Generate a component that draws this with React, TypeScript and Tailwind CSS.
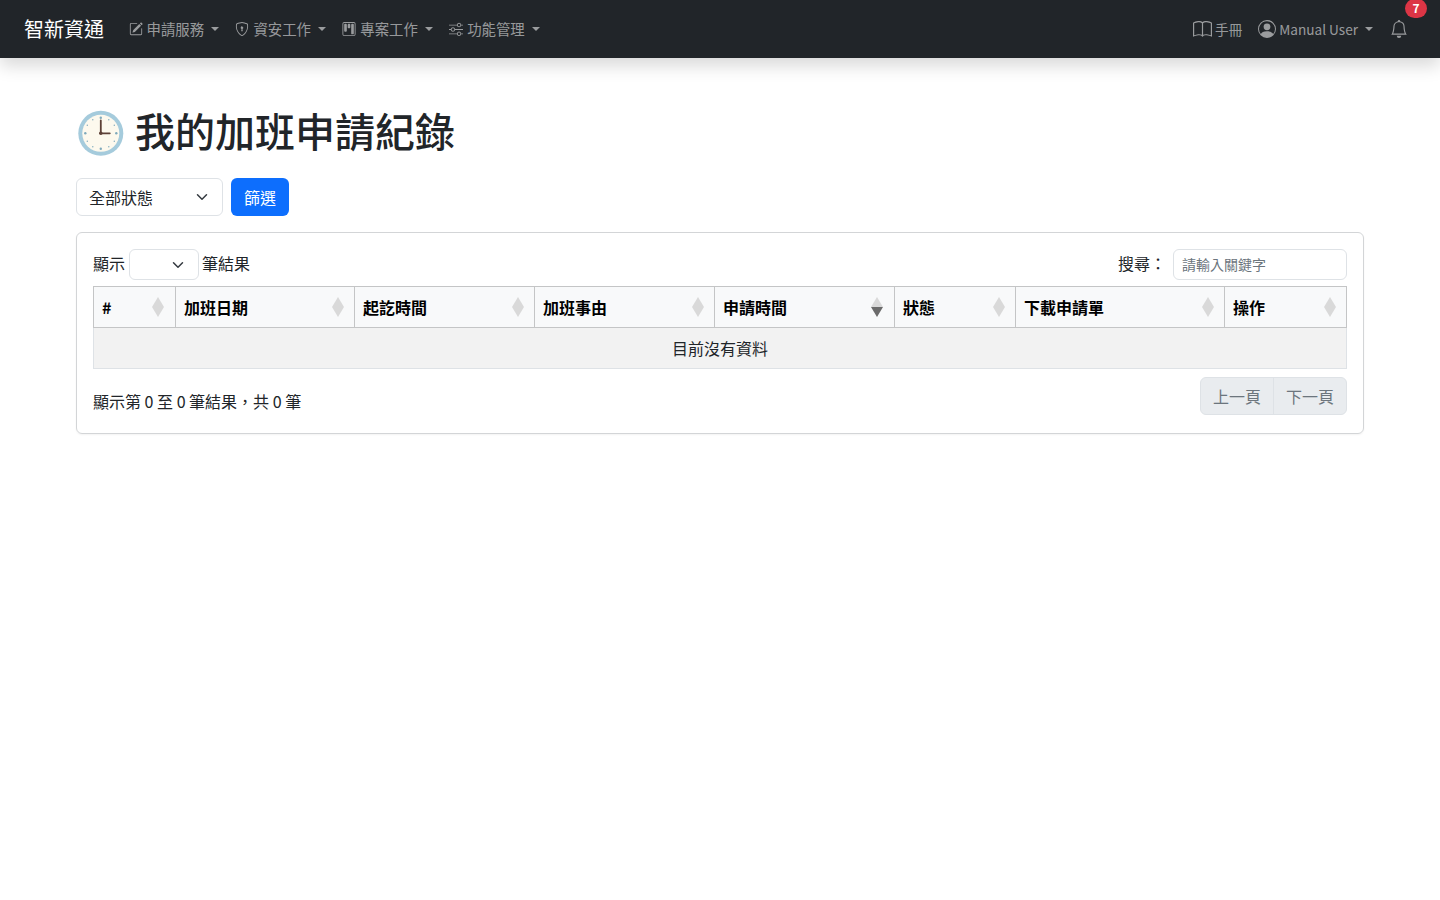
import { BsPencilSquare, BsShieldLock, BsKanban, BsSliders, BsBook, BsPersonCircle, BsBell } from 'react-icons/bs';

const NAV = [
  { label: '申請服務', icon: BsPencilSquare },
  { label: '資安工作', icon: BsShieldLock },
  { label: '專案工作', icon: BsKanban },
  { label: '功能管理', icon: BsSliders },
];

const COLUMNS = [
  { label: '#', width: 82 },
  { label: '加班日期', width: 179 },
  { label: '起訖時間', width: 180 },
  { label: '加班事由', width: 180 },
  { label: '申請時間', width: 180, sorted: true },
  { label: '狀態', width: 121 },
  { label: '下載申請單', width: 209 },
  { label: '操作', width: 122 },
];

function Caret() {
  return <span className="ml-[7px] h-0 w-0 border-x-[4px] border-t-[4px] border-x-transparent border-t-current" />;
}

function Chevron() {
  return (
    <svg viewBox="0 0 16 16" className="h-3 w-3 text-[#343a40]" fill="none" stroke="currentColor" strokeWidth="2" strokeLinecap="round" strokeLinejoin="round">
      <path d="m2 5 6 6 6-6" />
    </svg>
  );
}

function SortIcon({ sorted }: { sorted?: boolean }) {
  return (
    <svg viewBox="0 0 12 20" className="h-5 w-3">
      <path d="M6 0 12 10H0Z" fill="#d9d9d9" />
      <path d="M6 20 0 10h12Z" fill={sorted ? '#6b6b6b' : '#d9d9d9'} />
    </svg>
  );
}

function ClockIcon() {
  return (
    <svg viewBox="0 0 48 48" className="h-12 w-12 shrink-0">
      <g transform="translate(0.8 1.3)">
        <circle cx="24" cy="24" r="22.5" fill="#a5cbdc" />
        <circle cx="24" cy="24" r="18.5" fill="#fdf9ee" />
        <g fill="#7fa9bb">
          <circle cx="24" cy="8.5" r="1.2" />
          <circle cx="24" cy="39.5" r="1.2" />
          <circle cx="8.5" cy="24" r="1.2" />
          <circle cx="39.5" cy="24" r="1.2" />
          <circle cx="16" cy="10.5" r=".7" />
          <circle cx="32" cy="10.5" r=".7" />
          <circle cx="10.5" cy="16" r=".7" />
          <circle cx="37.5" cy="16" r=".7" />
          <circle cx="10.5" cy="32" r=".7" />
          <circle cx="37.5" cy="32" r=".7" />
          <circle cx="16" cy="37.5" r=".7" />
          <circle cx="32" cy="37.5" r=".7" />
        </g>
        <path d="M24 11v13h9" fill="none" stroke="#5d4037" strokeWidth="1.8" strokeLinecap="round" strokeLinejoin="round" />
        <circle cx="24" cy="24" r="1.8" fill="#5d4037" />
      </g>
    </svg>
  );
}

export default function App() {
  return (
    <div className="min-h-[900px] bg-white text-base text-[#212529] font-['Noto_Sans_CJK_TC',sans-serif]">
      {/* Navbar */}
      <nav className="flex h-[58px] items-center bg-[#212529] pl-6 pr-8 shadow-[0_8px_16px_rgba(0,0,0,0.15)]">
        <span className="mr-[24.5px] text-xl leading-[30px] text-white">智新資通</span>
        <ul className="flex items-center gap-[16.3px] text-[14.4px] text-[#ffffff8c]">
          {NAV.map(({ label, icon: Icon }) => (
            <li key={label} className="flex items-center">
              <Icon className="mr-1 h-[14px] w-[14px]" />
              <span>{label}</span>
              <Caret />
            </li>
          ))}
        </ul>
        <div className="ml-auto flex items-center text-[13.6px] text-[#ffffff8c]">
          <BsBook className="mt-[2px] mr-[3px] h-[19px] w-[19px]" />
          <span className="mt-[1px]">手冊</span>
          <BsPersonCircle className="ml-4 mr-[3px] h-[18px] w-[18px]" />
          <span>Manual User</span>
          <Caret />
          <div className="relative ml-[17px]">
            <BsBell className="block h-[18px] w-[18px]" />
            <span className="absolute -top-[21px] left-[15px] flex h-[19px] w-[22px] items-center justify-center rounded-full bg-[#dc3545] text-xs font-bold text-white">7</span>
          </div>
        </div>
      </nav>

      <main className="mx-auto w-[1288px] pt-[48px]">
        <h1 className="flex h-[52px] items-center gap-[11px] text-[40px] font-medium leading-[48px]">
          <ClockIcon />
          <span className="mb-1">我的加班申請紀錄</span>
        </h1>

        {/* Filter */}
        <div className="mt-5 flex gap-2">
          <div className="flex h-[38px] w-[147px] items-center justify-between rounded-md border border-[#dee2e6] pl-3 pr-[14px]">
            <span>全部狀態</span>
            <Chevron />
          </div>
          <button className="h-[38px] w-[58px] rounded-md bg-[#0d6efd] text-white">篩選</button>
        </div>

        {/* Table card */}
        <section className="mt-4 h-[202px] rounded-md border border-[#d3d5d7] p-4 shadow-[0_1px_2px_rgba(0,0,0,0.05)]">
          <div className="flex h-[31px] items-center justify-between">
            <div className="flex items-center">
              <span className="mb-1">顯示</span>
              <div className="ml-1 mr-[3px] flex h-[31px] w-[70px] items-center justify-end rounded-md border border-[#dee2e6] pr-[14px]">
                <Chevron />
              </div>
              <span className="mb-1">筆結果</span>
            </div>
            <div className="flex items-center">
              <span className="mb-1">搜尋：</span>
              <div className="ml-[7px] flex h-[31px] w-[174px] items-center rounded-md border border-[#dee2e6] pb-[2px] pl-2 text-sm text-[#6c757d]">請輸入關鍵字</div>
            </div>
          </div>

          <table className="mt-[6px] w-[1254px] table-fixed border-collapse">
            <colgroup>
              {COLUMNS.map((c) => (
                <col key={c.label} style={{ width: c.width }} />
              ))}
            </colgroup>
            <thead>
              <tr className="h-[41px] bg-[#f8f9fa]">
                {COLUMNS.map((c) => (
                  <th key={c.label} className="border border-[#c4c5c6] px-2 text-left font-bold text-black">
                    <div className={c.sorted || c.label === '#' ? 'flex items-center justify-between pr-[3.5px]' : 'flex items-center justify-between pr-[2.5px]'}>
                      <span>{c.label}</span>
                      <SortIcon sorted={c.sorted} />
                    </div>
                  </th>
                ))}
              </tr>
            </thead>
            <tbody>
              <tr className="h-[41px] bg-[#f2f2f2]">
                <td colSpan={8} className="border border-[#dee2e6] text-center">目前沒有資料</td>
              </tr>
            </tbody>
          </table>

          <div className="mt-2 flex items-start justify-between">
            <span className="mt-[12px]">顯示第 0 至 0 筆結果，共 0 筆</span>
            <div className="flex h-[38px] overflow-hidden rounded-md border border-[#dee2e6] bg-[#e9ecef] text-[#6c757d]">
              <span className="flex w-[73px] items-center justify-center border-r border-[#dee2e6]">上一頁</span>
              <span className="flex w-[72px] items-center justify-center">下一頁</span>
            </div>
          </div>
        </section>
      </main>
    </div>
  );
}
